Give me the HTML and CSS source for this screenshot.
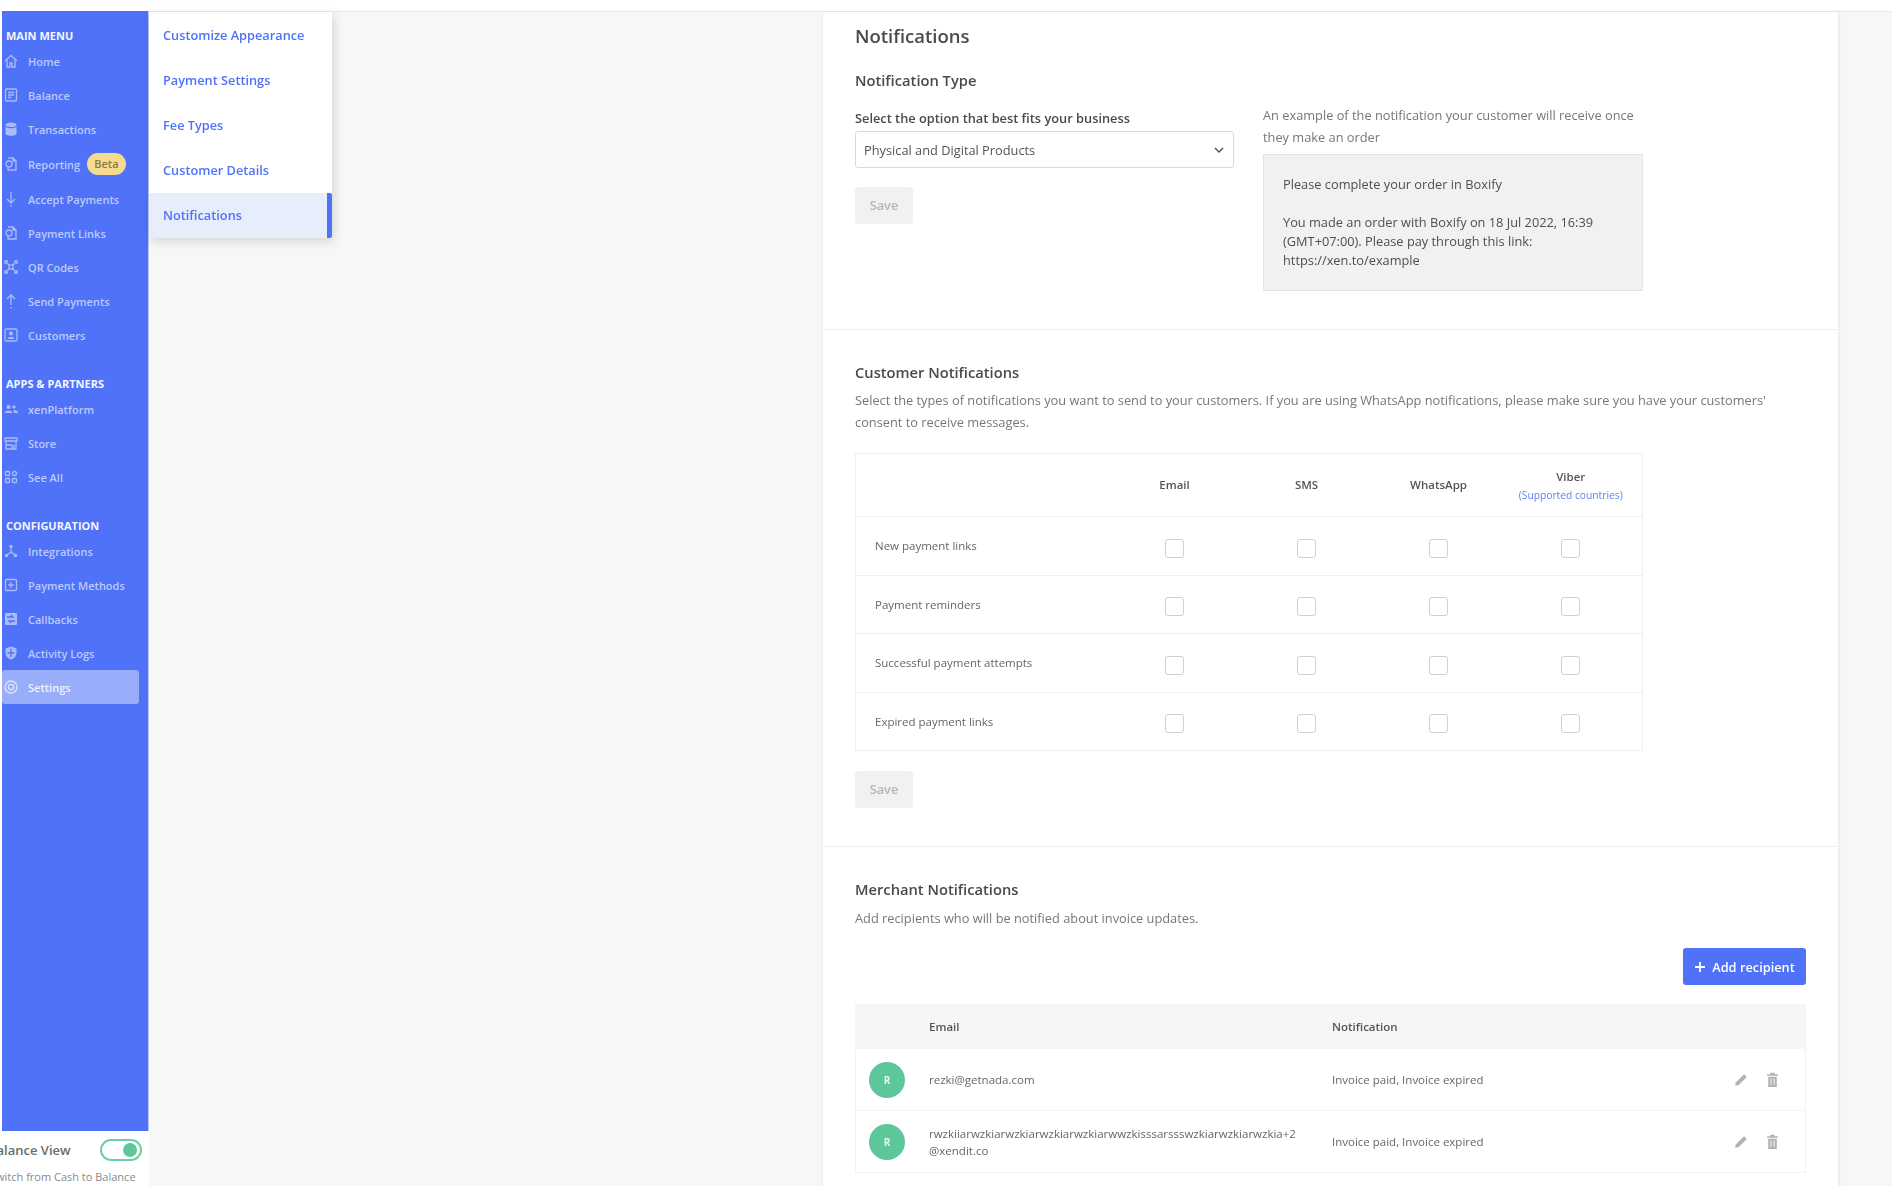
FILE: index.html
```html
<!DOCTYPE html>
<html>
<head>
  <title>Notifications settings</title>
  <link rel="stylesheet" href="styles.css">
</head>
<body>
  <div class="topbar"></div>
  <div class="page">
    <div class="sidebar">
      <nav class="nav">
        <h4 class="nav-title">MAIN MENU</h4>
        <a class="nav-item"><svg viewBox="0 0 16 16"><path d="M2 8l6-5.5L14 8M4 7v7h3v-4h2v4h3V7"/></svg>Home</a>
        <a class="nav-item"><svg viewBox="0 0 16 16"><rect x="2.5" y="2" width="11" height="12" rx="1"/><path d="M5 5.5h6M5 8h6M5 10.5h3"/></svg>Balance</a>
        <a class="nav-item"><svg viewBox="0 0 16 16"><ellipse class="fill" cx="8" cy="3.8" rx="5.5" ry="2.3"/><path class="fill" d="M2.5 5.5c1 2.4 10 2.4 11 0v7.5c-1 2.4-10 2.4-11 0z"/></svg>Transactions</a>
        <a class="nav-item nav-item-tall"><svg viewBox="0 0 16 16"><path d="M5 2h5l3 3v9H5v-3M10 2v3h3"/><circle cx="6" cy="8" r="3"/></svg>Reporting<span class="beta">Beta</span></a>
        <a class="nav-item"><svg viewBox="0 0 16 16"><path d="M8 1v11M4 8l4 4 4-4M8 14v1.5"/></svg>Accept Payments</a>
        <a class="nav-item"><svg viewBox="0 0 16 16"><path d="M5 2h5l3 3v9H5v-3M10 2v3h3"/><circle cx="6" cy="8" r="3"/></svg>Payment Links</a>
        <a class="nav-item"><svg viewBox="0 0 16 16"><path d="M2 2l4 4M14 2l-4 4M2 14l4-4M14 14l-4-4M2 5V2h3M11 2h3v3M2 11v3h3M14 11v3h-3"/><rect x="6" y="6" width="4" height="4"/></svg>QR Codes</a>
        <a class="nav-item"><svg viewBox="0 0 16 16"><path d="M8 12V2M4 6l4-4 4 4M8 14v1.5"/></svg>Send Payments</a>
        <a class="nav-item"><svg viewBox="0 0 16 16"><rect x="2" y="2" width="12" height="12" rx="1"/><circle class="fill" cx="8" cy="6.5" r="2"/><path class="fill" d="M4.5 12c.5-3 6.500-3 7 0z"/></svg>Customers</a>

        <h4 class="nav-title nav-title-gap">APPS &amp; PARTNERS</h4>
        <a class="nav-item"><svg viewBox="0 0 16 16"><circle class="fill" cx="5.500" cy="6" r="2"/><circle class="fill" cx="11" cy="6" r="1.700"/><path class="fill" d="M1.500 12c0-3.500 8-3.500 8 0zM10.500 9c2-.5 4.500.5 4.500 3h-4z"/></svg>xenPlatform</a>
        <a class="nav-item"><svg viewBox="0 0 16 16"><path d="M2 3h12v3H2zM3 6v8h10V6M3 10h6v4M11 10v4"/></svg>Store</a>
        <a class="nav-item"><svg viewBox="0 0 16 16"><rect x="2.500" y="2.500" width="4" height="4" rx=".5"/><circle cx="11.500" cy="4.500" r="2"/><rect x="2.500" y="9.500" width="4" height="4" rx=".5"/><rect x="9.500" y="9.500" width="4" height="4" rx=".5"/></svg>See All</a>

        <h4 class="nav-title nav-title-gap">CONFIGURATION</h4>
        <a class="nav-item"><svg viewBox="0 0 16 16"><path d="M8 5v4M8 9l-4 3M8 9l4 3"/><circle class="fill" cx="8" cy="3.500" r="1.700"/><circle class="fill" cx="3.500" cy="12.500" r="1.700"/><circle class="fill" cx="12.500" cy="12.500" r="1.700"/></svg>Integrations</a>
        <a class="nav-item"><svg viewBox="0 0 16 16"><rect x="2.500" y="2.500" width="11" height="11" rx="1"/><path d="M8 5v6M5 8h6"/></svg>Payment Methods</a>
        <a class="nav-item"><svg viewBox="0 0 16 16"><rect class="fill" x="2" y="2" width="12" height="12" rx="1"/><path class="cut" d="M4 6h6l-2-2M12 10H6l2 2"/></svg>Callbacks</a>
        <a class="nav-item"><svg viewBox="0 0 16 16"><path class="fill" d="M8 1.500l5.500 2v4c0 3.500-2.500 6-5.500 7-3-1-5.500-3.500-5.500-7v-4z"/><path class="cut" d="M8 4v8M4.500 8h7"/></svg>Activity Logs</a>
        <a class="nav-item nav-item-active"><svg viewBox="0 0 16 16"><circle cx="8" cy="8" r="6"/><circle cx="8" cy="8" r="2.700"/></svg>Settings</a>
      </nav>
      <div class="balance">
        <div class="balance-row">
          <span class="balance-name">Balance View</span>
          <span class="toggle"><span class="knob"></span></span>
        </div>
        <div class="balance-note">Switch from Cash to Balance</div>
      </div>
    </div>

    <div class="submenu">
      <a class="submenu-item">Customize Appearance</a>
      <a class="submenu-item">Payment Settings</a>
      <a class="submenu-item">Fee Types</a>
      <a class="submenu-item">Customer Details</a>
      <a class="submenu-item submenu-item-active">Notifications</a>
    </div>

    <main class="panel">
      <section class="section section-first">
        <h2 class="page-title">Notifications</h2>
        <h3 class="heading heading-type">Notification Type</h3>
        <div class="type-row">
          <div class="type-left">
            <label class="field-label">Select the option that best fits your business</label>
            <div class="select">
              <span>Physical and Digital Products</span>
              <svg viewBox="0 0 12 12"><path d="M2 4l4 4 4-4"/></svg>
            </div>
            <button class="save">Save</button>
          </div>
          <div class="type-right">
            <p class="muted">An example of the notification your customer will receive once they make an order</p>
            <div class="example">
              <p>Please complete your order in Boxify</p>
              <p>You made an order with Boxify on 18 Jul 2022, 16:39 (GMT+07:00). Please pay through this link: https://xen.to/example</p>
            </div>
          </div>
        </div>
      </section>

      <section class="section">
        <h3 class="heading">Customer Notifications</h3>
        <p class="muted desc">Select the types of notifications you want to send to your customers. If you are using WhatsApp notifications, please make sure you have your customers' consent to receive messages.</p>
        <table class="channels">
          <tr class="channels-head">
            <th></th>
            <th>Email</th>
            <th>SMS</th>
            <th>WhatsApp</th>
            <th>Viber<a class="countries">(Supported countries)</a></th>
          </tr>
          <tr>
            <td>New payment links</td>
            <td><span class="check"></span></td><td><span class="check"></span></td><td><span class="check"></span></td><td><span class="check"></span></td>
          </tr>
          <tr>
            <td>Payment reminders</td>
            <td><span class="check"></span></td><td><span class="check"></span></td><td><span class="check"></span></td><td><span class="check"></span></td>
          </tr>
          <tr>
            <td>Successful payment attempts</td>
            <td><span class="check"></span></td><td><span class="check"></span></td><td><span class="check"></span></td><td><span class="check"></span></td>
          </tr>
          <tr>
            <td>Expired payment links</td>
            <td><span class="check"></span></td><td><span class="check"></span></td><td><span class="check"></span></td><td><span class="check"></span></td>
          </tr>
        </table>
        <button class="save">Save</button>
      </section>

      <section class="section section-last">
        <h3 class="heading">Merchant Notifications</h3>
        <p class="muted merchant-desc">Add recipients who will be notified about invoice updates.</p>
        <div class="actions">
          <button class="add"><svg viewBox="0 0 12 12"><path d="M6 1v10M1 6h10"/></svg>Add recipient</button>
        </div>
        <div class="recipients">
          <div class="recipients-head">
            <span class="col-email">Email</span>
            <span class="col-note">Notification</span>
          </div>
          <div class="recipient">
            <span class="avatar">R</span>
            <span class="col-email">rezki@getnada.com</span>
            <span class="col-note">Invoice paid, Invoice expired</span>
            <span class="row-icons">
              <svg viewBox="0 0 14 14"><path d="M1 13l.8-3.400 7.600-7.600 2.600 2.600-7.600 7.600z"/></svg>
              <svg viewBox="0 0 14 14"><path d="M2 2h10v1.500H2zM5 .8h4V2H5zM3 4.500h8V14H3z"/><path class="cut" d="M5.500 6v6M8.500 6v6"/></svg>
            </span>
          </div>
          <div class="recipient">
            <span class="avatar">R</span>
            <span class="col-email">rwzkiiarwzkiarwzkiarwzkiarwzkiarwwzkisssarssswzkiarwzkiarwzkia+2<br>@xendit.co</span>
            <span class="col-note">Invoice paid, Invoice expired</span>
            <span class="row-icons">
              <svg viewBox="0 0 14 14"><path d="M1 13l.8-3.400 7.600-7.600 2.600 2.600-7.600 7.600z"/></svg>
              <svg viewBox="0 0 14 14"><path d="M2 2h10v1.500H2zM5 .8h4V2H5zM3 4.500h8V14H3z"/><path class="cut" d="M5.500 6v6M8.500 6v6"/></svg>
            </span>
          </div>
        </div>
      </section>
    </main>
  </div>
</body>
</html>
```
FILE: styles.css
```css
* {
  box-sizing: border-box;
}
html, body {
  margin: 0;
  height: 1186px;
  overflow: hidden;
}
body {
  font-family: "Open Sans", sans-serif;
  background-color: #f7f7f7;
  color: #4a4a4a;
  font-size: 12.8px;
  filter: blur(0.5px);
}
.topbar {
  height: 12px;
  background-color: #fff;
  border-bottom: 1px solid #e8e8e8;
}
.page {
  display: flex;
  height: 1174px;
}

/* left menu */
.sidebar {
  width: 149px;
  flex-shrink: 0;
  display: flex;
  flex-direction: column;
  margin-top: -1px;
  background-color: #fff;
}
.nav {
  height: 1120px;
  margin-left: 2px;
  padding-top: 17px;
  background-color: #4f72f8;
  border-right: 1px solid #b9c7fb;
}
.nav-title {
  margin: 0 0 0 4px;
  height: 16px;
  line-height: 16px;
  font-size: 11px;
  font-weight: 700;
  color: #f4f6ff;
}
.nav-title-gap {
  margin-top: 24px;
}
.nav-item {
  display: flex;
  align-items: center;
  height: 34px;
  margin-right: 9px;
  padding-left: 1px;
  font-size: 11px;
  font-weight: 600;
  color: #bccafc;
  border-radius: 3px;
}
.nav-item svg {
  width: 16px;
  height: 16px;
  margin-right: 9px;
  flex-shrink: 0;
  fill: none;
  stroke: #a9bbfb;
  stroke-width: 1.3;
}
.nav-item svg .fill {
  fill: #a9bbfb;
  stroke: none;
}
.nav-item svg .cut {
  stroke: #4f72f8;
}
.nav-item-tall {
  height: 36px;
}
.nav-item-active {
  background-color: #98aefa;
  color: #eef2ff;
}
.nav-item-active svg {
  stroke: #dbe3fd;
}
.beta {
  margin-left: 7px;
  padding: 0 7px;
  height: 22px;
  line-height: 21px;
  border-radius: 11px;
  background-color: #f6db8f;
  color: #8d7a3f;
  font-size: 11px;
}
.balance {
  flex: 1;
  padding-top: 2px;
  overflow: hidden;
  white-space: nowrap;
  color: #6b6b6b;
}
.balance-row {
  display: flex;
  align-items: center;
  justify-content: space-between;
  height: 34px;
  padding-right: 7px;
}
.balance-name {
  margin-left: -12px;
  font-size: 13px;
  font-weight: 600;
}
.toggle {
  display: flex;
  align-items: center;
  justify-content: flex-end;
  width: 42px;
  height: 22px;
  padding-right: 3px;
  border: 2px solid #6fcea5;
  border-radius: 11px;
  background-color: #fff;
}
.knob {
  width: 14px;
  height: 14px;
  border-radius: 50%;
  background-color: #5ec79a;
}
.balance-note {
  margin-left: -10px;
  font-size: 11px;
  line-height: 20px;
  color: #8a8a8a;
}

/* second level menu */
.submenu {
  width: 183px;
  height: 226px;
  flex-shrink: 0;
  padding-top: 1px;
  background-color: #fff;
  box-shadow: 2px 3px 10px rgba(0, 0, 0, 0.14);
}
.submenu-item {
  display: block;
  height: 45px;
  line-height: 45px;
  padding-left: 14px;
  font-size: 12.75px;
  font-weight: 600;
  color: #4f72f8;
}
.submenu-item-active {
  background-color: #e6eefc;
  border-right: 5px solid #4f72f8;
  border-radius: 0 2px 2px 0;
}

/* settings panel */
.panel {
  width: 1016px;
  margin-left: 490px;
  background-color: #fff;
  border-left: 1px solid #efefef;
  box-shadow: 1px 0 3px rgba(0, 0, 0, 0.07);
}
.section {
  padding: 31px 32px 38px 32px;
  border-bottom: 1px solid #efefef;
}
.section-first {
  padding-top: 10px;
  padding-bottom: 38px;
}
.section-last {
  border-bottom: 0;
}
.page-title {
  margin: 0;
  font-size: 18.5px;
  line-height: 28px;
  font-weight: 600;
  color: #4a4a4a;
}
.heading {
  margin: 0;
  font-size: 14.7px;
  line-height: 22px;
  font-weight: 600;
  color: #4a4a4a;
}
.heading-type {
  margin-top: 19px;
}
.muted {
  margin: 0;
  line-height: 22px;
  font-size: 12.8px;
  color: #777;
}
.desc {
  margin-top: 6px;
}
.merchant-desc {
  margin-top: 7px;
}
.type-row {
  display: flex;
  margin-top: 13px;
}
.type-left {
  width: 379px;
  padding-top: 4px;
}
.type-right {
  width: 380px;
  margin-left: 29px;
}
.field-label {
  display: block;
  line-height: 20px;
  font-size: 12.8px;
  font-weight: 600;
  color: #4a4a4a;
}
.select {
  display: flex;
  align-items: center;
  justify-content: space-between;
  height: 37px;
  margin-top: 3px;
  padding: 0 8px;
  border: 1px solid #d9d9d9;
  border-radius: 3px;
  color: #555;
}
.select svg {
  width: 12px;
  height: 12px;
  fill: none;
  stroke: #555;
  stroke-width: 1.500;
}
.save {
  display: block;
  width: 58px;
  height: 37px;
  margin-top: 19px;
  padding: 0 0 2px 0;
  border: 0;
  border-radius: 3px;
  background-color: #f1f1f1;
  color: #b5b5b5;
  font-family: inherit;
  font-size: 12.8px;
  font-weight: 600;
}
.example {
  height: 137px;
  margin-top: 6px;
  padding: 20px 19px;
  background-color: #f1f1f1;
  border: 1px solid #e4e4e4;
  line-height: 19px;
  color: #4f4f4f;
}
.example p {
  margin: 0 0 19px 0;
}
.channels {
  width: 787px;
  margin-top: 20px;
  table-layout: fixed;
  border-collapse: collapse;
  border: 1px solid #efefef;
  font-size: 11.5px;
  color: #666;
}
.channels tr {
  height: 58.500px;
  border-bottom: 1px solid #efefef;
}
.channels-head {
  height: 63px !important;
}
.channels th {
  font-weight: 600;
  color: #555;
  width: 132px;
  line-height: 20px;
}
.channels th:first-child {
  width: 253px;
}
.channels th:last-child {
  width: 138px;
}
.channels th:last-child,
.channels td:last-child {
  padding-right: 6px;
}
.channels td {
  text-align: center;
}
.channels td:first-child {
  text-align: left;
  padding-left: 19px;
}
.countries {
  display: block;
  font-size: 10.250px;
  font-weight: 400;
  line-height: 16px;
  color: #5f7ff8;
}
.check {
  display: inline-block;
  width: 19px;
  height: 19px;
  margin-top: 5px;
  border: 1.500px solid #d0d0d0;
  border-radius: 3px;
  vertical-align: middle;
}
.channels + .save {
  margin-top: 20px;
}
.actions {
  display: flex;
  justify-content: flex-end;
  margin-top: 19px;
}
.add {
  display: flex;
  align-items: center;
  justify-content: center;
  gap: 6px;
  width: 123px;
  height: 37px;
  padding: 0;
  border: 0;
  border-radius: 3px;
  background-color: #4f72f8;
  color: #fff;
  font-family: inherit;
  font-size: 12.8px;
  font-weight: 600;
}
.add svg {
  width: 12px;
  height: 12px;
  fill: none;
  stroke: #fff;
  stroke-width: 1.800;
}
.recipients {
  margin-top: 19px;
  font-size: 11.500px;
  color: #666;
}
.recipients-head {
  display: flex;
  align-items: center;
  height: 45px;
  padding-left: 74px;
  background-color: #f6f6f6;
  font-weight: 600;
  color: #555;
}
.recipient {
  display: flex;
  align-items: center;
  height: 62px;
  padding-left: 13px;
  border: 1px solid #f3f3f3;
  border-top: 0;
}
.avatar {
  width: 36px;
  height: 36px;
  margin-right: 24px;
  flex-shrink: 0;
  border-radius: 50%;
  background-color: #5ec79a;
  color: #e3f6ec;
  font-size: 10px;
  font-weight: 700;
  line-height: 36px;
  text-align: center;
}
.col-email {
  width: 403px;
  line-height: 17px;
}
.col-note {
  width: 402px;
}
.row-icons {
  display: flex;
  gap: 16px;
}
.row-icons svg {
  width: 15px;
  height: 15px;
  fill: #b3b3b3;
}
.row-icons .cut {
  fill: none;
  stroke: #fff;
  stroke-width: 0.800;
}
```
